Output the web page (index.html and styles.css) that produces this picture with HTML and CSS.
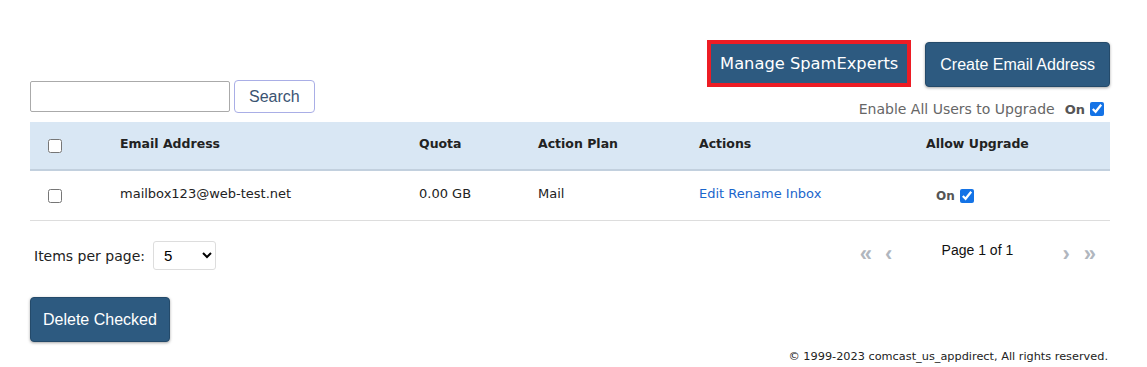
FILE: index.html
```html
<!DOCTYPE html>
<html lang="en">
<head>
    <meta charset="UTF-8">
    <title>Email Addresses</title>
    <link rel="stylesheet" href="styles.css">
</head>
<body>

<div class="page">
    <!-- Top toolbar -->
    <div class="toolbar">
        <div class="search-bar">
            <input type="text" class="search-input">
            <button class="btn-light">Search</button>
        </div>
        <div class="toolbar-right">
            <div class="top-actions">
                <div class="highlight">
                    <button class="btn btn-spam">Manage SpamExperts</button>
                </div>
                <button class="btn">Create Email Address</button>
            </div>
            <div class="upgrade-all">
                <span>Enable All Users to Upgrade</span>
                <b class="on-label">On</b>
                <input type="checkbox" checked>
            </div>
        </div>
    </div>

    <!-- Mailbox table -->
    <table class="mail-table">
        <colgroup>
            <col style="width: 90px">
            <col style="width: 299px">
            <col style="width: 119px">
            <col style="width: 161px">
            <col style="width: 227px">
            <col>
        </colgroup>
        <thead>
            <tr>
                <th class="check-cell"><input type="checkbox"></th>
                <th>Email Address</th>
                <th>Quota</th>
                <th>Action Plan</th>
                <th>Actions</th>
                <th>Allow Upgrade</th>
            </tr>
        </thead>
        <tbody>
            <tr>
                <td class="check-cell"><input type="checkbox"></td>
                <td>mailbox123@web-test.net</td>
                <td>0.00 GB</td>
                <td>Mail</td>
                <td><a href="#edit">Edit</a> <a href="#rename">Rename</a> <a href="#inbox">Inbox</a></td>
                <td class="upgrade-cell"><b class="on-label">On</b> <input type="checkbox" checked></td>
            </tr>
        </tbody>
    </table>

    <!-- Paging -->
    <div class="pager">
        <div class="per-page">
            <span>Items per page:</span>
            <select>
                <option>5</option>
                <option>10</option>
                <option>25</option>
            </select>
        </div>
        <div class="page-nav">
            <span class="arrow arrow-double">&laquo;</span>
            <span class="arrow">&lsaquo;</span>
            <span class="page-label">Page 1 of 1</span>
            <span class="arrow">&rsaquo;</span>
            <span class="arrow arrow-double">&raquo;</span>
        </div>
    </div>

    <button class="btn btn-delete">Delete Checked</button>

    <div class="footer">&copy; 1999-2023 comcast_us_appdirect, All rights reserved.</div>
</div>

</body>
</html>
```

FILE: styles.css
```css
body {
    margin: 0;
    font-family: "DejaVu Sans", Verdana, sans-serif;
    color: #222;
    background: #fff;
}

.page {
    padding: 40px 37px 0 30px;
}

/* Toolbar */
.toolbar {
    display: flex;
    justify-content: space-between;
    align-items: flex-end;
}

.search-bar {
    display: flex;
    align-items: center;
    gap: 4px;
    margin-bottom: 4px;
}

.search-input {
    width: 200px;
    height: 31px;
    box-sizing: border-box;
    border: 1px solid #aaa;
    border-radius: 2px;
}

.btn-light {
    height: 33px;
    padding: 0 14px;
    font-family: "Liberation Sans", Arial, sans-serif;
    font-size: 16px;
    color: #3b5372;
    background: #fff;
    border: 1px solid #a9aee6;
    border-radius: 4px;
}

.toolbar-right {
    display: flex;
    flex-direction: column;
    align-items: flex-end;
}

.top-actions {
    display: flex;
    align-items: flex-end;
    gap: 14px;
}

.btn {
    height: 45px;
    padding: 0 14px;
    font-family: "Liberation Sans", Arial, sans-serif;
    font-size: 16px;
    color: #fff;
    background: #2d5a80;
    border: 1px solid #244a6a;
    border-radius: 4px;
    box-shadow: 0 1px 3px rgba(0, 0, 0, 0.35);
}

.highlight {
    border: 4px solid #ed1c24;
    line-height: 0;
}

.btn-spam {
    height: 39px;
    padding: 0 9px;
    font-family: "DejaVu Sans", Verdana, sans-serif;
    font-size: 16.3px;
    border: none;
    border-radius: 0;
    box-shadow: none;
}

.upgrade-all {
    display: flex;
    align-items: center;
    margin-top: 14px;
    margin-right: 6px;
    font-size: 14px;
    color: #666;
}

.upgrade-all .on-label {
    margin-left: 10px;
    font-size: 13px;
}

.on-label {
    font-size: 12px;
    color: #555;
}

input[type="checkbox"] {
    width: 14px;
    height: 14px;
    margin: 0 0 0 5px;
    accent-color: #1473e6;
    vertical-align: middle;
}

/* Table */
.mail-table {
    width: 100%;
    margin-top: 5px;
    border-collapse: collapse;
    table-layout: fixed;
    font-size: 13px;
}

.mail-table th {
    height: 42px;
    padding: 0 0 5px 0;
    text-align: left;
    font-size: 12.5px;
    font-weight: bold;
    color: #222;
    background: #d9e7f4;
    border-bottom: 2px solid #c2d0de;
}

.mail-table td {
    height: 44px;
    padding: 0 0 5px 0;
    color: #222;
    border-bottom: 1px solid #ddd;
}

.mail-table .check-cell {
    padding: 0 0 0 18px;
}

.check-cell input[type="checkbox"] {
    margin: 0;
    accent-color: #555;
}

.mail-table a {
    color: #1a66cc;
    text-decoration: none;
}

.mail-table .upgrade-cell {
    padding: 0 0 0 10px;
}

.upgrade-cell input[type="checkbox"] {
    margin-left: 1px;
}

/* Pager */
.pager {
    display: flex;
    justify-content: space-between;
    align-items: flex-start;
    margin-top: 20px;
}

.per-page {
    display: flex;
    align-items: center;
    gap: 8px;
    padding-left: 4px;
    font-size: 14px;
    color: #222;
}

.per-page select {
    width: 63px;
    height: 29px;
    padding-left: 6px;
    font-family: "Liberation Sans", Arial, sans-serif;
    font-size: 15px;
    background: #fff;
    border: 1px solid #ddd;
    border-radius: 3px;
}

.page-nav {
    display: flex;
    align-items: center;
    padding-right: 8px;
    font-family: "Liberation Sans", Arial, sans-serif;
}

.arrow {
    font-size: 22px;
    font-weight: bold;
    color: #b0b6be;
    margin: 0 7px;
}

.arrow-double {
    letter-spacing: -1px;
}

.page-label {
    width: 156px;
    text-align: center;
    font-size: 14px;
    color: #111;
    margin-top: -8px;
}

.btn-delete {
    margin-top: 27px;
    padding: 0 12px;
}

.footer {
    text-align: right;
    margin-top: 7px;
    padding-right: 2px;
    font-size: 11.3px;
    line-height: 16px;
    color: #222;
}
```
